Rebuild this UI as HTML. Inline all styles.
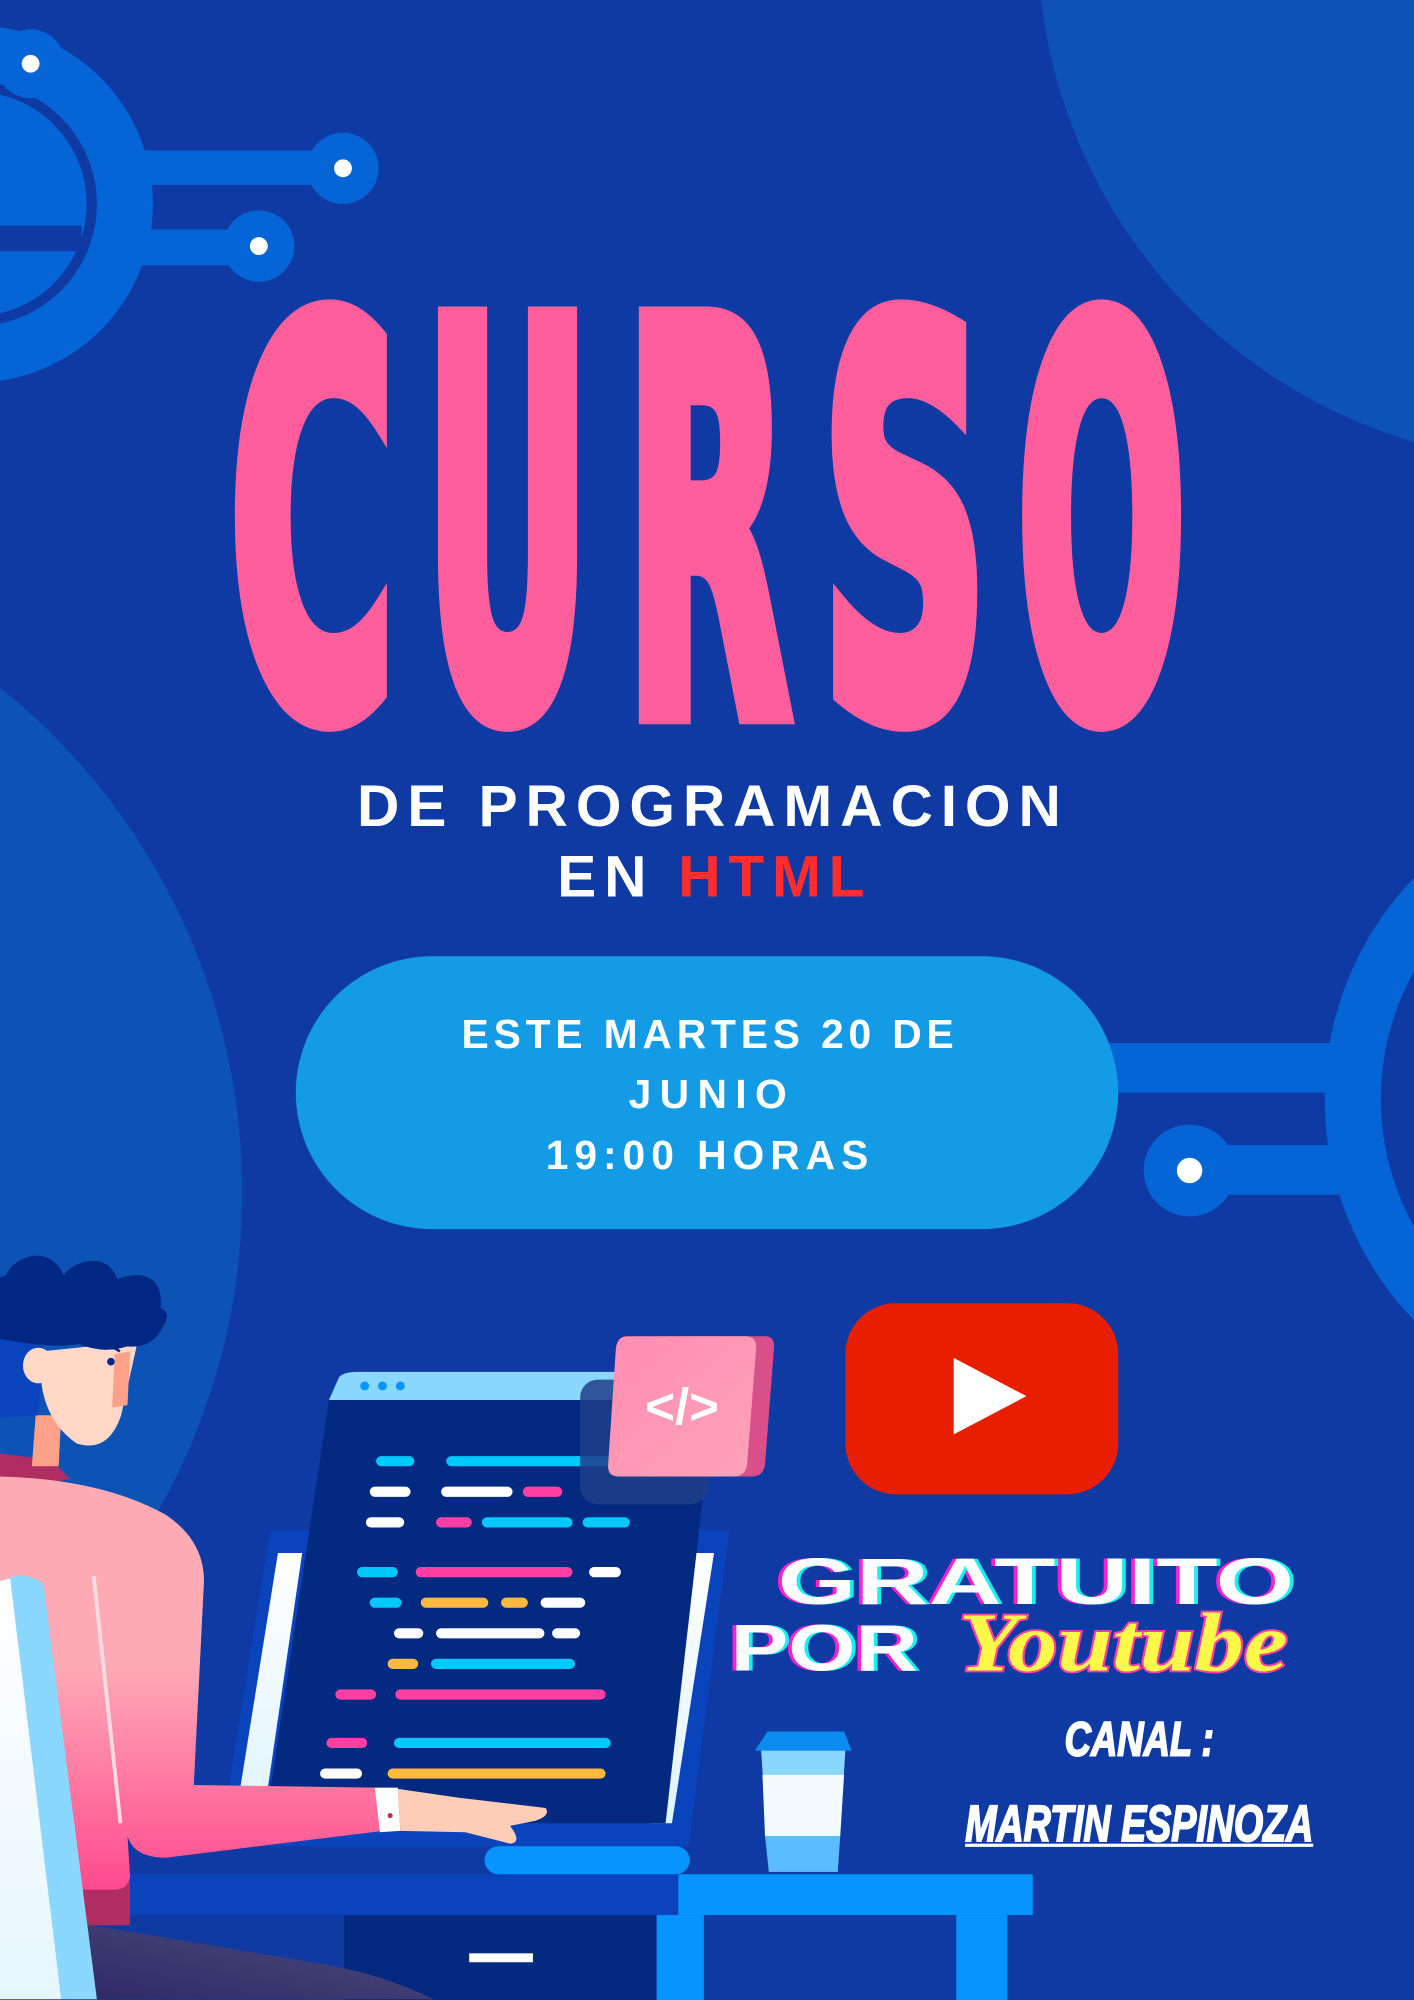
<!DOCTYPE html>
<html><head><meta charset="utf-8"><style>
html,body{margin:0;padding:0;background:#0f3aa3;}
svg{display:block;}
</style></head><body>
<svg width="1414" height="2000" viewBox="0 0 1109 1568.6" xmlns="http://www.w3.org/2000/svg">
<defs>
<linearGradient id="shirt" x1="0" y1="0" x2="0" y2="1"><stop offset="0.45" stop-color="#ffabb6"/><stop offset="1" stop-color="#ff4a8e"/></linearGradient>
<linearGradient id="chairW" x1="0" y1="0" x2="0" y2="1"><stop offset="0" stop-color="#ffffff"/><stop offset="1" stop-color="#e6f6ff"/></linearGradient>
<linearGradient id="card" x1="0" y1="0" x2="1" y2="1"><stop offset="0" stop-color="#ff8db3"/><stop offset="1" stop-color="#ffa3b8"/></linearGradient>
<linearGradient id="pants" x1="0" y1="1" x2="1" y2="0"><stop offset="0" stop-color="#2f2a66"/><stop offset="1" stop-color="#4d4c7e"/></linearGradient>
<linearGradient id="strip" x1="0" y1="0" x2="0" y2="1"><stop offset="0" stop-color="#ffffff"/><stop offset="1" stop-color="#dff3ff"/></linearGradient>
</defs>
<rect width="1109" height="1569" fill="#0f3aa3"/>
<circle cx="1224" cy="-47" r="410" fill="#0d52b5"/>
<circle cx="-317" cy="935" r="507" fill="#0d52b5"/>
<circle cx="-20" cy="160" r="140" fill="#0565d6"/>
<circle cx="-20" cy="160" r="92" fill="none" stroke="#0f3aa3" stroke-width="8"/>
<rect x="0" y="177" width="64" height="20" fill="#0f3aa3"/>
<rect x="105" y="118" width="140" height="27" fill="#0565d6"/>
<circle cx="269" cy="132" r="28" fill="#0565d6"/><circle cx="269" cy="132" r="7" fill="#fff"/>
<rect x="100" y="180" width="85" height="28" fill="#0565d6"/>
<circle cx="203" cy="193" r="28" fill="#0565d6"/><circle cx="203" cy="193" r="7" fill="#fff"/>
<circle cx="24" cy="50" r="27" fill="#0565d6"/><circle cx="24" cy="50" r="7" fill="#fff"/>
<circle cx="1289" cy="862" r="228" fill="none" stroke="#0565d6" stroke-width="44"/>
<rect x="870" y="818" width="180" height="39" fill="#0565d6"/>
<rect x="940" y="898" width="115" height="39" fill="#0565d6"/>
<circle cx="933" cy="918" r="36" fill="#0565d6"/><circle cx="933" cy="918" r="10" fill="#fff"/>
<g font-family="'DejaVu Sans Condensed','Liberation Sans Narrow','Liberation Sans',sans-serif" font-weight="bold" font-size="422" fill="#ff5e9c" stroke="#ff5e9c" stroke-width="20" stroke-linejoin="miter">
<text x="180" y="558" textLength="130" lengthAdjust="spacingAndGlyphs">C</text>
<text x="333" y="558" textLength="130" lengthAdjust="spacingAndGlyphs">U</text>
<text x="490" y="558" textLength="130" lengthAdjust="spacingAndGlyphs">R</text>
<text x="644" y="558" textLength="131" lengthAdjust="spacingAndGlyphs">S</text>
<text x="798" y="558" textLength="132" lengthAdjust="spacingAndGlyphs">O</text>
</g>
<g font-family="'Liberation Sans',sans-serif" font-weight="bold" font-size="46" fill="#fff">
<text x="280" y="648" textLength="552" lengthAdjust="spacing">DE PROGRAMACION</text>
<text x="437" y="703" textLength="241" lengthAdjust="spacing">EN <tspan fill="#ff2d2d">HTML</tspan></text>
</g>
<rect x="232" y="750" width="645" height="214" rx="107" fill="#139be6"/>
<g font-family="'Liberation Sans',sans-serif" font-weight="bold" font-size="32" fill="#fff">
<text x="362" y="822" textLength="386" lengthAdjust="spacing">ESTE MARTES 20 DE</text>
<text x="493" y="869" textLength="124" lengthAdjust="spacing">JUNIO</text>
<text x="428" y="917" textLength="253" lengthAdjust="spacing">19:00 HORAS</text>
</g>
<rect x="663" y="1022" width="214" height="150" rx="40" fill="#e81e00"/>
<polygon points="748,1065 805,1095 748,1125" fill="#fff"/>
<rect x="100" y="1470" width="432" height="32" fill="#0a44bd"/>
<rect x="532" y="1470" width="278" height="32" fill="#0695ff"/>
<rect x="270" y="1502" width="245" height="67" fill="#032a80"/>
<rect x="368" y="1532" width="50" height="7" fill="#fff"/>
<rect x="515" y="1502" width="37" height="67" fill="#0695ff"/>
<rect x="750" y="1502" width="40" height="67" fill="#0695ff"/>
<path d="M212,1200 L572,1200 L540,1448 L172,1448 Z" fill="#0a44bd"/>
<path d="M218,1218 L237,1218 L206,1430 L184,1430 Z" fill="url(#strip)"/>
<path d="M543,1218 L560,1218 L527,1430 L510,1430 Z" fill="url(#strip)"/>
<path d="M258,1098 L560,1098 L522,1430 L208,1430 Z" fill="#032a80"/>
<path d="M258,1098 L266,1080 Q270,1076 280,1076 L560,1076 L560,1098 Z" fill="#8ad8ff"/>
<circle cx="286" cy="1087" r="3.5" fill="#0695ff"/><circle cx="300" cy="1087" r="3.5" fill="#0695ff"/><circle cx="314" cy="1087" r="3.5" fill="#0695ff"/>
<g stroke-width="8" stroke-linecap="round">
<path d="M299,1146H321M354,1146H476" stroke="#00c8f8"/>
<path d="M294,1170H318M350,1170H398" stroke="#fff"/><path d="M414,1170H437" stroke="#ff3fa4"/>
<path d="M291,1194H313" stroke="#fff"/><path d="M346,1194H366" stroke="#ff3fa4"/><path d="M382,1194H445M461,1194H490" stroke="#00c8f8"/>
<path d="M284,1233H308" stroke="#00c8f8"/><path d="M330,1233H445" stroke="#ff3fa4"/><path d="M466,1233H483" stroke="#fff"/>
<path d="M294,1257H311" stroke="#00c8f8"/><path d="M334,1257H379M397,1257H410" stroke="#ffb93f"/><path d="M428,1257H455" stroke="#fff"/>
<path d="M313,1281H328M346,1281H423M437,1281H451" stroke="#fff"/>
<path d="M308,1305H324" stroke="#ffb93f"/><path d="M342,1305H447" stroke="#00c8f8"/>
<path d="M267,1329H291M314,1329H471" stroke="#ff3fa4"/>
<path d="M260,1367H284" stroke="#ff3fa4"/><path d="M313,1367H475" stroke="#00c8f8"/>
<path d="M255,1391H280" stroke="#fff"/><path d="M308,1391H471" stroke="#ffb93f"/>
</g>
<rect x="455" y="1082" width="100" height="98" rx="14" fill="#1e3f8a" opacity="0.85"/>
<path d="M522,1048 L600,1048 Q608,1048 607,1058 L600,1148 Q599,1158 590,1158 L512,1158 Z" fill="#d94f8a"/>
<path d="M492,1048 L584,1048 Q594,1048 593,1058 L586,1148 Q585,1158 575,1158 L485,1158 Q476,1158 477,1148 L483,1058 Q484,1048 492,1048 Z" fill="url(#card)"/>
<text x="535" y="1117" font-family="'Liberation Sans',sans-serif" font-weight="bold" font-size="40" fill="#fff" text-anchor="middle">&lt;/&gt;</text>
<rect x="380" y="1448" width="161" height="22" rx="11" fill="#0695ff"/>
<path d="M602,1358 L662,1358 L668,1373 L592,1373 Z" fill="#0a8cf0"/>
<path d="M597,1373 L663,1373 L657,1468 L603,1468 Z" fill="#8ad8ff"/>
<path d="M598,1392 L662,1392 L659,1440 L600,1440 Z" fill="#f4fbff"/>
<path d="M600,1440 L659,1440 L657,1468 L603,1468 Z" fill="#5bbcff"/>
<path d="M60,1508 L250,1540 Q300,1548 340,1568 L60,1568 Z" fill="url(#pants)"/>
<rect x="62" y="1475" width="40" height="35" fill="#b02d62"/>
<path d="M0,1140 L40,1145 L55,1160 L0,1170 Z" fill="#b02d62"/>
<path d="M28,1110 L48,1110 L46,1150 L25,1150 Z" fill="#ffa089"/>
<path d="M0,1158 Q80,1160 130,1188 Q160,1208 160,1240 L152,1400 L294,1402 L300,1436 L130,1457 Q105,1457 100,1440 L102,1472 Q100,1482 90,1482 L0,1482 Z" fill="url(#shirt)"/>
<path d="M72,1236 L75,1236 L96,1430 L93,1430 Z" fill="#ffdbe2"/>
<path d="M294,1402 L312,1402 L314,1436 L298,1437 Z" fill="#fff"/>
<circle cx="306" cy="1424" r="2" fill="#b02d62"/>
<path d="M312,1403 L360,1410 L428,1418 Q432,1424 420,1428 L400,1432 Q410,1445 400,1446 L365,1437 L314,1436 Z" fill="#ffcdb8"/>
<path d="M32,1060 Q28,1110 60,1132 Q85,1140 95,1110 L108,1052 Z" fill="#ffd8c8"/>
<path d="M90,1062 L102,1060 L100,1102 L88,1104 Z" fill="#ffa089"/>
<path d="M0,1040 L35,1040 L30,1110 L0,1112 Z" fill="#0a44bd"/>
<ellipse cx="30" cy="1071" rx="12" ry="14" fill="#ffd8c8"/>
<circle cx="87" cy="1068" r="3" fill="#012784"/>
<path d="M82,1058 Q88,1055 94,1060" stroke="#012784" stroke-width="2" fill="none"/>
<path d="M0,1050 Q40,1058 62,1054 Q80,1062 100,1056 Q120,1058 128,1040 Q135,1030 126,1026 Q128,1003 110,1000 Q100,1000 92,1003 Q85,985 65,990 Q55,993 50,1000 Q42,983 25,985 Q8,990 5,1000 L0,1002 Z" fill="#012784"/>
<path d="M6,1238 Q20,1232 34,1242 L76,1568 L48,1568 Z" fill="#8ad8ff"/>
<path d="M0,1240 L8,1238 L48,1568 L0,1568 Z" fill="url(#chairW)"/>
<g font-family="'Liberation Sans',sans-serif" font-weight="bold" font-size="52">
<text x="607" y="1258" textLength="405" lengthAdjust="spacingAndGlyphs" fill="#ff1fd0">GRATUITO</text>
<text x="613" y="1258" textLength="405" lengthAdjust="spacingAndGlyphs" fill="#14f1f1">GRATUITO</text>
<text x="610" y="1258" textLength="405" lengthAdjust="spacingAndGlyphs" fill="#fff">GRATUITO</text>
<text x="570" y="1310" textLength="147" lengthAdjust="spacingAndGlyphs" fill="#ff1fd0">POR</text>
<text x="576" y="1310" textLength="147" lengthAdjust="spacingAndGlyphs" fill="#14f1f1">POR</text>
<text x="573" y="1310" textLength="147" lengthAdjust="spacingAndGlyphs" fill="#fff">POR</text>
</g>
<text x="752" y="1310" textLength="258" lengthAdjust="spacingAndGlyphs" font-family="'Liberation Serif',serif" font-weight="bold" font-style="italic" font-size="66" fill="#fff94a" stroke="#ff3fa4" stroke-width="3" paint-order="stroke">Youtube</text>
<g font-family="'Liberation Sans Narrow','Liberation Sans',sans-serif" font-weight="bold" font-style="italic" fill="#fff" stroke="#fff" stroke-width="1.5">
<text x="835" y="1377" textLength="117" lengthAdjust="spacingAndGlyphs" font-size="38">CANAL :</text>
<text x="757" y="1444" textLength="273" lengthAdjust="spacingAndGlyphs" font-size="40">MARTIN ESPINOZA</text>
</g>
<rect x="757" y="1446" width="273" height="2.5" fill="#fff"/>
</svg>
</body></html>
